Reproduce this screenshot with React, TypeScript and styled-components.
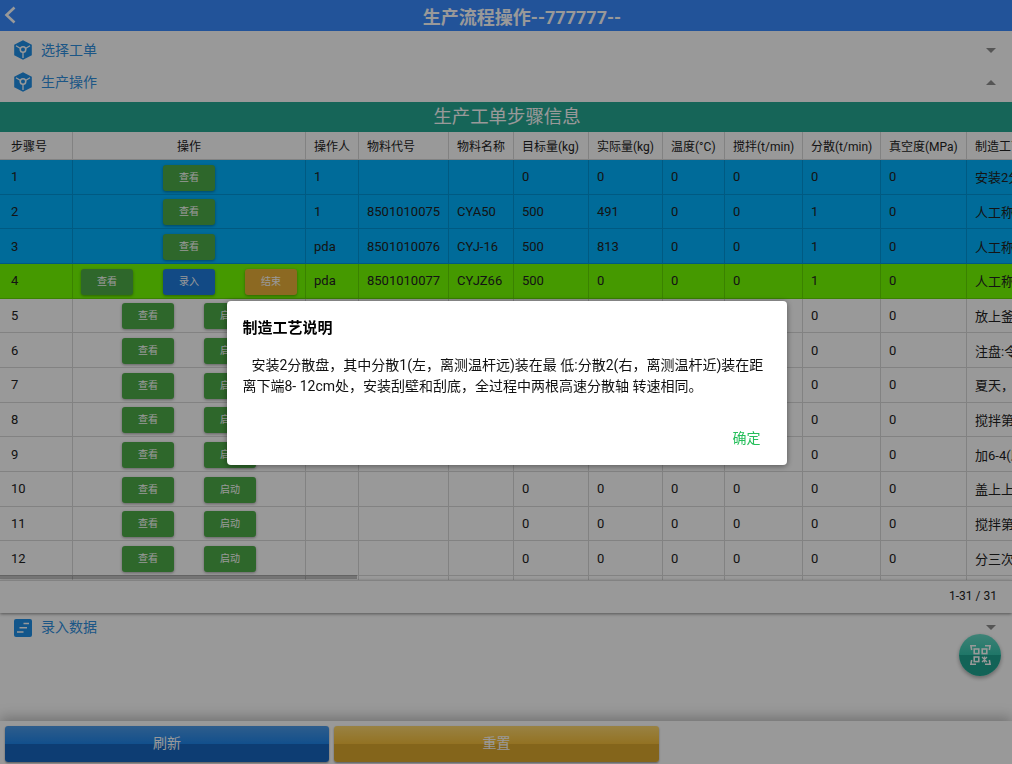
import styled, { createGlobalStyle } from 'styled-components'

type Step = {
  no: number
  state?: 'done' | 'active'
  operator?: string
  code?: string
  name?: string
  target?: number
  actual?: number
  disperse?: number
  craft: string
}

const steps: Step[] = [
  { no: 1, state: 'done', operator: '1', target: 0, actual: 0, disperse: 0, craft: '安装2分散盘，其中分散1(左，离测温杆远)装在最低' },
  { no: 2, state: 'done', operator: '1', code: '8501010075', name: 'CYA50', target: 500, actual: 491, disperse: 1, craft: '人工称量' },
  { no: 3, state: 'done', operator: 'pda', code: '8501010076', name: 'CYJ-16', target: 500, actual: 813, disperse: 1, craft: '人工称量' },
  { no: 4, state: 'active', operator: 'pda', code: '8501010077', name: 'CYJZ66', target: 500, actual: 0, disperse: 1, craft: '人工称量' },
  { no: 5, target: 0, actual: 0, disperse: 0, craft: '放上釜盖' },
  { no: 6, target: 0, actual: 0, disperse: 0, craft: '注盘:令分散' },
  { no: 7, target: 0, actual: 0, disperse: 0, craft: '夏天，开冷却水' },
  { no: 8, target: 0, actual: 0, disperse: 0, craft: '搅拌第一次' },
  { no: 9, target: 0, actual: 0, disperse: 0, craft: '加6-4(助剂)' },
  { no: 10, target: 0, actual: 0, disperse: 0, craft: '盖上上盖' },
  { no: 11, target: 0, actual: 0, disperse: 0, craft: '搅拌第二次' },
  { no: 12, target: 0, actual: 0, disperse: 0, craft: '分三次加料' },
  { no: 13, target: 0, actual: 0, disperse: 0, craft: '取样' },
]

const columns = ['步骤号', '操作', '操作人', '物料代号', '物料名称', '目标量(kg)', '实际量(kg)', '温度(°C)', '搅拌(t/min)', '分散(t/min)', '真空度(MPa)', '制造工艺说明']
const widths = [73, 233, 53, 90, 65, 75, 74, 62, 78, 78, 86, 320]

function CubeIcon () {
  return (
    <svg width="18" height="20" viewBox="0 0 18 20">
      <path d="M9 0.3 L17.8 4.8 V15.2 L9 19.7 L0.2 15.2 V4.8 Z" fill="#1F8FE8" />
      <path d="M9 10 L2 5.8 M9 10 L16 5.8 M9 10 V18" stroke="#fff" strokeWidth="1.3" />
      <circle cx="9" cy="9.6" r="3.5" fill="#fff" />
      <circle cx="9" cy="9.6" r="2" fill="#1F8FE8" />
    </svg>
  )
}

function DataIcon () {
  return (
    <svg width="18" height="18" viewBox="0 0 18 18">
      <rect width="18" height="18" rx="2" fill="#1F8FE8" />
      <path d="M9.5 4.5 H15 M5.5 8.8 H13 M3 13 H9.5" stroke="#fff" strokeWidth="1.6" />
    </svg>
  )
}

function ScanIcon () {
  return (
    <svg width="21" height="20" viewBox="0 0 21 20" fill="none" stroke="#fff" strokeWidth="1.6">
      <path d="M6 0.8 H0.9 L1.7 5 M15 0.8 H20.1 L19.3 5 M1.7 15 L0.9 19.2 H6 M19.3 15 L20.1 19.2 H15" />
      <rect x="4.2" y="4" width="4.6" height="4.6" />
      <rect x="12.2" y="4" width="4.6" height="4.6" />
      <rect x="4.2" y="12" width="4.6" height="4.6" />
      <path d="M12 12 L17 17 M17 12 L12 17 M14.5 11.6 V17.4" strokeWidth="1.3" />
    </svg>
  )
}

function StepActions ({ state }: { state?: Step['state'] }) {
  return (
    <ActionGroup>
      <ActionButton>查看</ActionButton>
      {state === 'active' && <ActionButton $tone="blue">录入</ActionButton>}
      {state === 'active' && <ActionButton $tone="yellow">结束</ActionButton>}
      {!state && <ActionButton>启动</ActionButton>}
    </ActionGroup>
  )
}

export default function App () {
  return (
    <Page>
      <GlobalStyle />
      <TopBar>
        <BackButton>
          <svg width="12" height="18" viewBox="0 0 12 18" fill="none" stroke="#fff" strokeWidth="2.6">
            <path d="M10.5 1.5 L2.5 9 L10.5 16.5" />
          </svg>
        </BackButton>
        <TopTitle>生产流程操作--777777--</TopTitle>
      </TopBar>

      <SectionGroup>
        <SectionRow>
          <CubeIcon />
          <SectionName>选择工单</SectionName>
          <Caret />
        </SectionRow>
        <SectionRow>
          <CubeIcon />
          <SectionName>生产操作</SectionName>
          <Caret $up />
        </SectionRow>
      </SectionGroup>

      <TableTitle>生产工单步骤信息</TableTitle>
      <TableWrap>
        <StepTable>
          <colgroup>
            {widths.map((w, i) => <col key={i} style={{ width: w }} />)}
          </colgroup>
          <thead>
            <tr>
              {columns.map((c, i) => <HeadCell key={c} $center={i === 1}>{c}</HeadCell>)}
            </tr>
          </thead>
          <tbody>
            {steps.map(s => (
              <StepRow key={s.no} $state={s.state}>
                <Cell>{s.no}</Cell>
                <Cell><StepActions state={s.state} /></Cell>
                <Cell>{s.operator}</Cell>
                <Cell>{s.code}</Cell>
                <Cell>{s.name}</Cell>
                <Cell>{s.target}</Cell>
                <Cell>{s.actual}</Cell>
                <Cell>0</Cell>
                <Cell>0</Cell>
                <Cell>{s.disperse}</Cell>
                <Cell>0</Cell>
                <Cell>{s.craft}</Cell>
              </StepRow>
            ))}
          </tbody>
        </StepTable>
        <ScrollThumb />
      </TableWrap>
      <Pagination>1-31 / 31</Pagination>

      <DataSection>
        <DataIcon />
        <SectionName>录入数据</SectionName>
        <Caret />
      </DataSection>

      <FooterBar>
        <FooterButton $tone="blue">刷新</FooterButton>
        <FooterButton $tone="yellow">重置</FooterButton>
      </FooterBar>

      <ScanFab><ScanIcon /></ScanFab>

      <Overlay>
        <Dialog>
          <DialogTitle>制造工艺说明</DialogTitle>
          <DialogBody>{'\u00A0\u00A0'}安装2分散盘，其中分散1(左，离测温杆远)装在最 低:分散2(右，离测温杆近)装在距离下端8- 12cm处，安装刮壁和刮底，全过程中两根高速分散轴 转速相同。</DialogBody>
          <DialogActions>
            <ConfirmButton>确定</ConfirmButton>
          </DialogActions>
        </Dialog>
      </Overlay>
    </Page>
  )
}

const GlobalStyle = createGlobalStyle`
  html, body {
    margin: 0;
    padding: 0;
    height: 100%;
    overflow: hidden;
    background: #fff;
  }

  body {
    font-family: Roboto, "Noto Sans CJK SC", sans-serif;
    color: #222;
  }

  * {
    box-sizing: border-box;
  }
`

const Page = styled.div`
  display: flex;
  flex-direction: column;
  height: 100vh;
  overflow: hidden;
`

const TopBar = styled.header`
  position: relative;
  flex: none;
  height: 31px;
  display: flex;
  align-items: center;
  justify-content: center;
  background: #398AFF;
`

const BackButton = styled.div`
  position: absolute;
  left: 4px;
  top: 6px;
  line-height: 0;
`

const TopTitle = styled.div`
  margin-left: 32px;
  font-size: 18px;
  font-weight: 700;
  color: #fff;
`

const SectionGroup = styled.div`
  flex: none;
  padding: 3px 0 4px;
`

const SectionRow = styled.div`
  height: 32px;
  display: flex;
  align-items: center;
  padding: 0 16px 0 14px;
`

const SectionName = styled.span`
  flex: 1;
  margin-left: 9px;
  font-size: 14px;
  line-height: 16px;
  color: #2F8FE0;
`

const Caret = styled.i<{ $up?: boolean }>`
  width: 0;
  height: 0;
  border-left: 5px solid transparent;
  border-right: 5px solid transparent;
  border-top: ${p => (p.$up ? '0' : '5px solid #8E8E8E')};
  border-bottom: ${p => (p.$up ? '5px solid #8E8E8E' : '0')};
`

const TableTitle = styled.div`
  flex: none;
  height: 30px;
  padding-left: 2px;
  line-height: 29px;
  text-align: center;
  font-size: 18.4px;
  color: #fff;
  background: #26A893;
`

const TableWrap = styled.div`
  position: relative;
  flex: none;
  height: 448px;
  overflow: hidden;
`

const StepTable = styled.table`
  table-layout: fixed;
  width: 1287px;
  border-collapse: separate;
  border-spacing: 0;
`

const HeadCell = styled.th<{ $center?: boolean }>`
  height: 28px;
  padding: 0 0 0 ${p => (p.$center ? '0' : '8px')};
  font-size: 12px;
  font-weight: 400;
  white-space: nowrap;
  overflow: hidden;
  text-align: ${p => (p.$center ? 'center' : 'left')};
  border-right: 1px solid rgba(0, 0, 0, 0.15);
  border-bottom: 1px solid rgba(0, 0, 0, 0.15);

  &:first-child {
    padding-left: 11px;
  }
`

const Cell = styled.td`
  height: 34.67px;
  padding: 0 0 0 8px;
  font-size: 13px;
  white-space: nowrap;
  overflow: hidden;
  border-right: 1px solid rgba(0, 0, 0, 0.15);
  border-bottom: 1px solid rgba(0, 0, 0, 0.15);

  &:first-child {
    padding-left: 11px;
  }

  &:nth-child(2) {
    padding: 0;
  }
`

const StepRow = styled.tr<{ $state?: Step['state'] }>`
  background: ${p => (p.$state === 'done' ? '#00B2FF' : p.$state === 'active' ? '#73FF00' : 'transparent')};
`

const ActionGroup = styled.div`
  display: flex;
  justify-content: center;
  gap: 30px;
  margin-top: 2px;
`

const toneColors = { green: '#4EAC48', blue: '#1E7CDE', yellow: '#EAB03A' }

const ActionButton = styled.div<{ $tone?: keyof typeof toneColors }>`
  width: 52px;
  height: 26px;
  line-height: 26px;
  text-align: center;
  font-size: 10px;
  color: #fff;
  border-radius: 3px;
  background: ${p => toneColors[p.$tone ?? 'green']};
  box-shadow: 0 1px 3px rgba(0, 0, 0, 0.35);
`

const ScrollThumb = styled.div`
  position: absolute;
  left: 0;
  top: 443px;
  width: 357px;
  height: 4px;
  background: rgba(0, 0, 0, 0.24);
`

const Pagination = styled.div`
  position: relative;
  flex: none;
  height: 33px;
  line-height: 30px;
  padding-right: 15px;
  text-align: right;
  font-size: 12px;
  border-top: 1px solid rgba(0, 0, 0, 0.15);
  box-shadow: 0 1px 3px rgba(0, 0, 0, 0.45);
`

const DataSection = styled.div`
  flex: 1;
  display: flex;
  align-items: flex-start;
  padding: 6px 16px 0 14px;

  ${Caret} {
    margin-top: 6px;
  }
`

const FooterBar = styled.footer`
  flex: none;
  height: 43px;
  display: grid;
  grid-template-columns: 324px 325px;
  gap: 5px;
  padding: 5px 5px 2px;
  background: #fff;
  box-shadow: 0 -4px 12px rgba(0, 0, 0, 0.25);
`

const footerGradients = {
  blue: 'linear-gradient(#4E9BE9, #1E85E9 50%, #1666C0 50%, #1666C0)',
  yellow: 'linear-gradient(#FFD971, #F5BE3A 50%, #DCA82D 50%, #DCA82D)',
}

const FooterButton = styled.div<{ $tone: keyof typeof footerGradients }>`
  height: 36px;
  line-height: 35px;
  text-align: center;
  font-size: 14px;
  color: #fff;
  border-radius: 3px;
  background: ${p => footerGradients[p.$tone]};
  box-shadow: 0 1px 2px rgba(0, 0, 0, 0.4);
`

const ScanFab = styled.div`
  position: fixed;
  left: 959px;
  top: 634px;
  width: 42px;
  height: 42px;
  display: flex;
  align-items: center;
  justify-content: center;
  border-radius: 50%;
  background: linear-gradient(#68DAC6, #34C5AD 50%, #1EA591 50%, #1EA591);
  box-shadow: 0 2px 4px rgba(0, 0, 0, 0.35);
`

const Overlay = styled.div`
  position: fixed;
  inset: 0;
  display: flex;
  align-items: center;
  justify-content: center;
  background: rgba(0, 0, 0, 0.4);
`

const Dialog = styled.div`
  width: 560px;
  height: 164px;
  margin: 1px 0 0 1px;
  padding: 16px 0 0;
  background: #fff;
  border-radius: 4px;
  box-shadow: 0 1px 6px rgba(0, 0, 0, 0.45);
`

const DialogTitle = styled.div`
  padding: 0 16px;
  font-size: 15px;
  line-height: 22px;
  font-weight: 700;
  color: #000;
`

const DialogBody = styled.div`
  margin-top: 16px;
  padding: 0 16px;
  font-size: 14px;
  line-height: 21px;
  text-indent: 2px;
  color: #111;
`

const DialogActions = styled.div`
  display: flex;
  justify-content: flex-end;
  margin-top: 23px;
  padding-right: 16px;
`

const ConfirmButton = styled.div`
  height: 36px;
  line-height: 36px;
  padding: 0 10px;
  font-size: 14px;
  color: #25BE5A;
`
